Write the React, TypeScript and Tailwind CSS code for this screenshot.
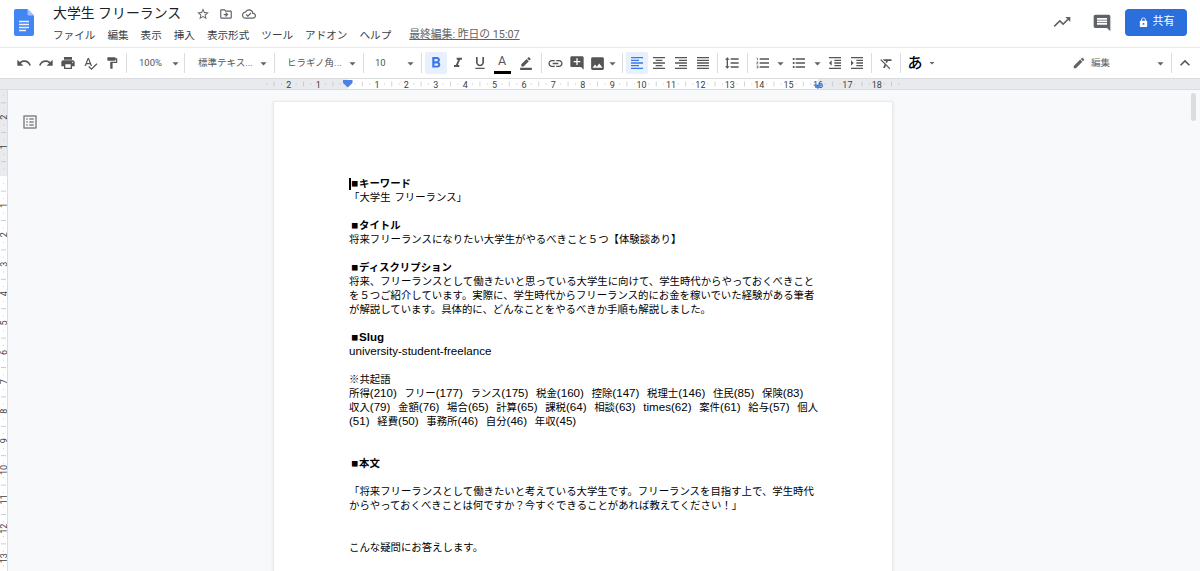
import type { ReactNode } from 'react';
import {
  MdUndo,
  MdRedo,
  MdPrint,
  MdSpellcheck,
  MdFormatPaint,
  MdArrowDropDown,
  MdFormatBold,
  MdFormatItalic,
  MdFormatUnderlined,
  MdBorderColor,
  MdLink,
  MdAddComment,
  MdImage,
  MdFormatAlignLeft,
  MdFormatAlignCenter,
  MdFormatAlignRight,
  MdFormatAlignJustify,
  MdFormatLineSpacing,
  MdFormatListNumbered,
  MdFormatListBulleted,
  MdFormatIndentDecrease,
  MdFormatIndentIncrease,
  MdFormatClear,
  MdEdit,
  MdExpandLess,
  MdTrendingUp,
  MdInsertComment,
  MdLock,
  MdStarBorder,
  MdOutlineDriveFileMove,
  MdOutlineCloudDone,
  MdOutlineListAlt,
} from 'react-icons/md';

const MENU = ['ファイル', '編集', '表示', '挿入', '表示形式', 'ツール', 'アドオン', 'ヘルプ'];

// Document body, one entry per rendered line. Empty text is a blank line.
// Bold lines are the headings, they get the ■ mark in front.
const LINES: { text: string; bold?: boolean }[] = [
  { text: 'キーワード', bold: true },
  { text: '「大学生 フリーランス」' },
  { text: '' },
  { text: 'タイトル', bold: true },
  { text: '将来フリーランスになりたい大学生がやるべきこと５つ【体験談あり】' },
  { text: '' },
  { text: 'ディスクリプション', bold: true },
  { text: '将来、フリーランスとして働きたいと思っている大学生に向けて、学生時代からやっておくべきこと' },
  { text: 'を５つご紹介しています。実際に、学生時代からフリーランス的にお金を稼いでいた経験がある筆者' },
  { text: 'が解説しています。具体的に、どんなことをやるべきか手順も解説しました。' },
  { text: '' },
  { text: 'Slug', bold: true },
  { text: 'university-student-freelance' },
  { text: '' },
  { text: '※共起語' },
  { text: '所得(210)  フリー(177)  ランス(175)  税金(160)  控除(147)  税理士(146)  住民(85)  保険(83)' },
  { text: '収入(79)  金額(76)  場合(65)  計算(65)  課税(64)  相談(63)  times(62)  案件(61)  給与(57)  個人' },
  { text: '(51)  経費(50)  事務所(46)  自分(46)  年収(45)' },
  { text: '' },
  { text: '' },
  { text: '本文', bold: true },
  { text: '' },
  { text: '「将来フリーランスとして働きたいと考えている大学生です。フリーランスを目指す上で、学生時代' },
  { text: 'からやっておくべきことは何ですか？今すぐできることがあれば教えてください！」' },
  { text: '' },
  { text: '' },
  { text: 'こんな疑問にお答えします。' },
];

function DocsLogo() {
  return (
    <svg width="20" height="27" viewBox="0 0 20 27">
      <path d="M2 0h11.5L20 6.5V25a2 2 0 0 1-2 2H2a2 2 0 0 1-2-2V2a2 2 0 0 1 2-2z" fill="#4285f4" />
      <path d="M13.5 0L20 6.5h-5a1.5 1.5 0 0 1-1.5-1.5z" fill="#a1c2fa" />
      <path d="M5 12.5h10M5 15.5h10M5 18.5h10M5 21.5h7" stroke="#f1f1f1" strokeWidth="1.4" />
    </svg>
  );
}

function Btn({ children, className = '' }: { children: ReactNode; className?: string }) {
  return <div className={`flex h-[22px] w-[22px] shrink-0 items-center justify-center text-[#555] ${className}`}>{children}</div>;
}

function Caret({ className = 'w-[12px]', size = 15 }: { className?: string; size?: number }) {
  return (
    <div className={`flex h-[22px] shrink-0 items-center justify-center text-[#5f6368] ${className}`}>
      <MdArrowDropDown size={size} className="shrink-0" />
    </div>
  );
}

function Sep({ className = '' }: { className?: string }) {
  return <div className={`h-[20px] w-px shrink-0 bg-[#dadce0] ${className}`} />;
}

function Drop({ label, className }: { label: string; className: string }) {
  return (
    <div className={`flex shrink-0 items-center justify-between text-[9.5px] text-[#555] ${className}`}>
      <span className="whitespace-nowrap">{label}</span>
      <Caret className="w-[14px]" />
    </div>
  );
}

function TopBar() {
  return (
    <div className="flex h-[48px] shrink-0 border-b border-[#e8eaed] bg-white pl-[14px]">
      <div className="pt-[9px]">
        <DocsLogo />
      </div>
      <div className="ml-[19px] flex flex-col">
        <div className="flex h-[27px] items-center">
          <span className="text-[13.9px] text-[#202124]">大学生 フリーランス</span>
          <div className="ml-[15px] flex items-center gap-[9px] text-[#5f6368]">
            <MdStarBorder size={14} />
            <MdOutlineDriveFileMove size={14} />
            <MdOutlineCloudDone size={14} />
          </div>
        </div>
        <div className="flex h-[17px] items-center gap-[12px] text-[10.6px] text-[#3c4043]">
          {MENU.map((m) => (
            <span key={m} className="whitespace-nowrap">
              {m}
            </span>
          ))}
          <span className="ml-[6px] whitespace-nowrap text-[10.8px] text-[#5f6368] underline">最終編集: 昨日の 15:07</span>
        </div>
      </div>
      <div className="ml-auto flex items-start pt-[9px] pr-[13px]">
        <MdTrendingUp size={20} className="mt-[3px] mr-[20px] text-[#5f6368]" />
        <MdInsertComment size={20} className="mt-[4px] mr-[13px] text-[#5f6368]" />
        <div className="flex h-[27px] w-[62px] items-center justify-center gap-[4px] rounded-[4px] bg-[#2a6fdb] text-[11px] text-white">
          <MdLock size={11} />
          <span>共有</span>
        </div>
      </div>
    </div>
  );
}

function Toolbar() {
  return (
    <div className="flex h-[31px] shrink-0 items-center border-b border-[#dadce0] bg-white pl-[13px]">
      <Btn><MdUndo size={16} /></Btn>
      <Btn><MdRedo size={16} /></Btn>
      <Btn><MdPrint size={16} /></Btn>
      <Btn><MdSpellcheck size={15} /></Btn>
      <Btn><MdFormatPaint size={14} /></Btn>
      <Sep className="ml-[3px]" />
      <Drop label="100%" className="w-[57px] pl-[12px] pr-[2px]" />
      <Sep />
      <Drop label="標準テキス..." className="w-[89px] pl-[13px] pr-[4px]" />
      <Sep />
      <Drop label="ヒラギノ角..." className="w-[88px] pl-[12px] pr-[4px]" />
      <Sep />
      <Drop label="10" className="w-[57px] pl-[11px] pr-[4px]" />
      <Sep />
      <Btn className="ml-[3px] rounded-[2px] bg-[#e8f0fe] !text-[#3b78e7]"><MdFormatBold size={18} /></Btn>
      <Btn><MdFormatItalic size={16} /></Btn>
      <Btn><MdFormatUnderlined size={16} /></Btn>
      <div className="flex h-[22px] w-[22px] shrink-0 flex-col items-center text-[#555]">
        <span className="h-[15px] text-[12.5px] leading-[17px]">A</span>
        <div className="mt-[4px] h-[3px] w-[17px] bg-black" />
      </div>
      <Btn className="ml-[2px]"><MdBorderColor size={14} /></Btn>
      <Sep className="ml-[4px]" />
      <Btn className="ml-[2px]"><MdLink size={17} /></Btn>
      <Btn><MdAddComment size={16} /></Btn>
      <Btn className="!w-[18px]"><MdImage size={17} /></Btn>
      <Caret />
      <Sep className="ml-[4px]" />
      <Btn className="ml-[3px] rounded-[2px] bg-[#e8f0fe] !text-[#3b78e7]"><MdFormatAlignLeft size={16} /></Btn>
      <Btn><MdFormatAlignCenter size={16} /></Btn>
      <Btn><MdFormatAlignRight size={16} /></Btn>
      <Btn><MdFormatAlignJustify size={16} /></Btn>
      <Sep className="ml-[3px]" />
      <Btn className="ml-[3px]"><MdFormatLineSpacing size={16} /></Btn>
      <Sep className="ml-[4px]" />
      <Btn className="ml-[4px]"><MdFormatListNumbered size={16} /></Btn>
      <Caret />
      <Btn className="ml-[2px]"><MdFormatListBulleted size={16} /></Btn>
      <Caret className="ml-[1px] w-[12px]" />
      <Btn className="ml-[1px]"><MdFormatIndentDecrease size={16} /></Btn>
      <Btn><MdFormatIndentIncrease size={16} /></Btn>
      <Sep className="ml-[3px]" />
      <Btn className="ml-[3px]"><MdFormatClear size={15} /></Btn>
      <Sep className="ml-[3px]" />
      <div className="ml-[3px] flex w-[22px] shrink-0 justify-center text-[15px] font-medium text-black">あ</div>
      <Caret size={12} />
      <div className="ml-[134px] flex w-[95px] shrink-0 items-center">
        <MdEdit size={14} className="text-[#5f6368]" />
        <span className="ml-[5px] text-[9.5px] text-[#5f6368]">編集</span>
        <Caret className="ml-auto w-[14px]" />
      </div>
      <Sep className="ml-[4px]" />
      <div className="ml-[3px] flex w-[20px] justify-center text-[#555]">
        <MdExpandLess size={20} />
      </div>
    </div>
  );
}

function HorizontalRuler() {
  const inch = 29.4;
  const zero = 347.6;
  const marks: number[] = [];
  for (let n = -2; n <= 18; n++) {
    if (n !== 0) marks.push(n);
  }
  const ticks: { x: number; tall: boolean }[] = [];
  for (let q = -11; q <= 75; q++) {
    if (q % 4 === 0) continue;
    ticks.push({ x: zero + (q * inch) / 4, tall: Math.abs(q % 4) === 2 });
  }
  return (
    <div className="h-[11px] shrink-0 border-b border-[#dadce0] bg-[#e8eaed]">
      <svg width="1200" height="10" className="block">
        <rect x="348" y="0" width="470" height="10" fill="#ffffff" />
        {ticks.map((t) =>
          t.tall ? (
            <line key={t.x} x1={t.x} x2={t.x} y1="2.5" y2="7.5" stroke="#bdc1c6" strokeWidth="0.7" />
          ) : (
            <rect key={t.x} x={t.x - 0.5} y="4.5" width="1" height="1" fill="#bdc1c6" />
          ),
        )}
        {marks.map((n) => (
          <text
            key={n}
            x={zero + n * inch}
            y="8.5"
            textAnchor="middle"
            fontSize="9"
            fill="#3c4043"
            fontFamily="Roboto, sans-serif"
          >
            {Math.abs(n)}
          </text>
        ))}
        <path d="M343 1h9.5v3l-4.75 4.5L343 4z" fill="#4a80e8" />
        <path d="M813 5.5h9.5L817.75 10z" fill="#4a80e8" />
      </svg>
    </div>
  );
}

function VerticalRuler() {
  const inch = 29.4;
  const zero = 86;
  const marks: number[] = [];
  for (let n = -2; n <= 13; n++) {
    if (n !== 0) marks.push(n);
  }
  const ticks: number[] = [];
  for (let q = -11; q <= 56; q++) {
    if (q % 4 !== 0) ticks.push(q);
  }
  return (
    <div className="w-[8px] shrink-0 border-r border-[#dadce0] bg-white">
      <svg width="7" height="482" className="block">
        <rect x="0" y="0" width="7" height="86" fill="#e8eaed" />
        {ticks.map((q) => (
          <rect
            key={q}
            x={Math.abs(q % 4) === 2 ? 1 : 3}
            y={zero + (q * inch) / 4}
            width={Math.abs(q % 4) === 2 ? 5 : 1}
            height="0.8"
            fill="#bdc1c6"
          />
        ))}
        {marks.map((n) => (
          <text
            key={n}
            transform={`translate(6.5 ${zero + n * inch}) rotate(-90)`}
            textAnchor="middle"
            fontSize="9"
            fill="#3c4043"
            fontFamily="Roboto, sans-serif"
          >
            {Math.abs(n)}
          </text>
        ))}
      </svg>
    </div>
  );
}

// Latin runs are set larger than the Japanese ones, like the original font pairing
function Mixed({ text }: { text: string }) {
  const parts = text.split(/([\x20-\x7e]+)/);
  return (
    <>
      {parts.map((p, i) =>
        i % 2 === 1 ? (
          <span key={i} className="text-[11.6px] leading-none [word-spacing:0.6px]">
            {p}
          </span>
        ) : (
          p
        ),
      )}
    </>
  );
}

function Page() {
  return (
    <div className="h-[600px] w-[620px] shrink-0 border border-[#e8eaed] bg-white pt-[75px] pl-[75px] text-[10.4px] leading-[14px] text-black shadow-[0_1px_3px_rgba(60,64,67,0.12)] [font-family:'Liberation_Sans','Noto_Sans_CJK_JP',sans-serif]">
      {LINES.map((l, i) => (
        <div key={i} className={`relative h-[14px] whitespace-pre ${l.bold ? 'pl-[2px] font-bold' : ''}`}>
          {i === 0 && <div className="absolute top-[1px] left-0 h-[12px] w-[2px] bg-black" />}
          {l.bold && <span className="mr-[1px] text-[11.6px] leading-none">■</span>}
          <Mixed text={l.text} />
        </div>
      ))}
    </div>
  );
}

export default function App() {
  return (
    <div className="relative flex h-[571px] w-[1200px] flex-col overflow-hidden bg-[#f8f9fa] [font-family:'Roboto','Noto_Sans_CJK_JP',sans-serif]">
      <TopBar />
      <Toolbar />
      <HorizontalRuler />
      <div className="flex min-h-0 flex-1 bg-[#f8f9fa]">
        <VerticalRuler />
        <div className="w-[265px] shrink-0 pt-[23px] pl-[13px] text-[#80868b]">
          <MdOutlineListAlt size={18} />
        </div>
        <div className="pt-[11px]">
          <Page />
        </div>
      </div>
      <div className="absolute top-[93px] right-[4px] h-[28px] w-[5px] rounded-full bg-[#dadce0]" />
    </div>
  );
}
